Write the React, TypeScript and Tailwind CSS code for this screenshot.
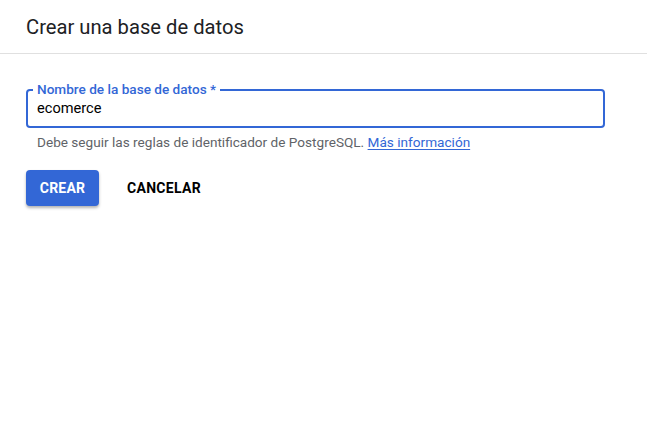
export default function App() {
  return (
    <div className="w-[647px] h-[430px] bg-white" style={{ fontFamily: "Roboto, 'Liberation Sans', sans-serif" }}>
      <div className="h-[54px] border-b border-[#e0e0e0] flex items-center pl-[26px]">
        <h1 className="text-[20.2px] leading-none text-[#202124] font-normal pt-[2px]">Crear una base de datos</h1>
      </div>
      <div className="pl-[26px] pr-[42px] pt-[35px]">
        <div className="relative h-[39px] border-2 border-[#3367d6] rounded-[4px] flex items-center pl-[9px]">
          <span className="absolute -top-[11px] left-[5px] bg-white px-[4px] text-[13.6px] leading-[18px] font-medium text-[#3367d6]">
            Nombre de la base de datos *
          </span>
          <span className="text-[14.6px] text-[#000] pt-[1px]">ecomerce</span>
        </div>
        <div className="pl-[11px] pt-[4px] text-[13.6px] leading-[20px] text-[#5f6368]">
          Debe seguir las reglas de identificador de PostgreSQL.{" "}
          <a className="text-[#3367d6] underline underline-offset-2">Más información</a>
        </div>
        <div className="flex items-center mt-[18px]">
          <button className="w-[73px] h-[36px] rounded-[4px] bg-[#3367d6] text-white text-[14px] font-bold tracking-[0.2px] shadow-[0_2px_3px_rgba(0,0,0,0.3)]">
            CREAR
          </button>
          <button className="ml-[28px] text-[14px] font-bold text-[#000] tracking-[0.3px]">CANCELAR</button>
        </div>
      </div>
    </div>
  );
}
